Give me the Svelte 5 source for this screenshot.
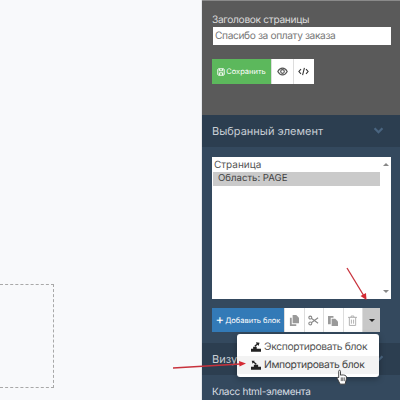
<script>
	let title = 'Спасибо за оплату заказа'
</script>

<div class="page">
	<div class="canvas">
		<div class="area"></div>
	</div>
	<div class="panel">
		<section class="top">
			<label for="title">Заголовок страницы</label>
			<input id="title" type="text" bind:value={title} />
			<div class="btns">
				<button class="save">
					<svg width="8" height="8" viewBox="0 0 10 10" fill="none" stroke="#fff" stroke-width="1.200"><rect x="1" y="1" width="8" height="8" rx="1"/><path d="M3 1v2.500h4V1M3 9V6h4v3"/></svg>
					Сохранить
				</button>
				<button class="ico">
					<svg width="11" height="9" viewBox="0 0 12 10" fill="none" stroke="#555" stroke-width="1.300"><path d="M.8 5C2 2.600 4 1.300 6 1.300S10 2.600 11.200 5C10 7.400 8 8.700 6 8.700S2 7.400.8 5z"/><circle cx="6" cy="5" r="2"/></svg>
				</button>
				<button class="ico">
					<svg width="11" height="9" viewBox="0 0 12 10" fill="none" stroke="#333" stroke-width="1.200"><path d="M3.200 2.400.9 5l2.300 2.600M8.800 2.400 11.100 5 8.800 7.600M7 1 5 9"/></svg>
				</button>
			</div>
		</section>

		<header class="head">
			<span>Выбранный элемент</span>
			<svg class="chev" width="11" height="7" viewBox="0 0 12 8" fill="none" stroke="#4a6580" stroke-width="2.600"><path d="M1.500 1.500 6 6l4.500-4.500"/></svg>
		</header>

		<section class="body">
			<div class="tree">
				<div class="tree-root">Страница</div>
				<div class="tree-item">Область: PAGE</div>
				<i class="scroll up"></i>
				<i class="scroll down"></i>
			</div>
			<div class="tools">
				<button class="add"><b>+</b>Добавить блок</button>
				<button class="tool">
					<svg width="10" height="11" viewBox="0 0 11 12" fill="#9a9a9a"><path d="M4 0h4l3 3v6H4z"/><path d="M1 3h2v7h5v2H1z"/></svg>
				</button>
				<button class="tool">
					<svg width="11" height="11" viewBox="0 0 12 12" fill="none" stroke="#888" stroke-width="1.200"><circle cx="2.500" cy="2.800" r="1.600"/><circle cx="2.500" cy="9.200" r="1.600"/><path d="M4 3.800 11 9M4 8.200 11 3"/></svg>
				</button>
				<button class="tool">
					<svg width="10" height="11" viewBox="0 0 11 12" fill="#9a9a9a"><path d="M0 1h6v2H3v7H0z"/><path d="M4 4h4l3 3v5H4z"/></svg>
				</button>
				<button class="tool">
					<svg width="9" height="11" viewBox="0 0 10 12" fill="none" stroke="#aaa" stroke-width="1"><path d="M0 2.500h10M3.500 2.500V1h3v1.500M1.500 2.500V11.500h7V2.500M3.800 5v4.500M6.200 5v4.500"/></svg>
				</button>
				<button class="caret"><i></i></button>
			</div>
		</section>

		<header class="head">
			<span>Визу</span>
			<svg class="chev" width="11" height="7" viewBox="0 0 12 8" fill="none" stroke="#4a6580" stroke-width="2.600"><path d="M1.500 1.500 6 6l4.500-4.500"/></svg>
		</header>

		<section class="body last">
			<div class="cls">Класс html-элемента</div>
		</section>

		<div class="menu">
			<div class="menu-item">
				<svg width="10" height="10" viewBox="0 0 14 13" fill="#222"><path d="M0 9h14v4H0zM3 9V6h5V9zM7 0l5 .5-1.500 4.500-1.200-1.800L6 6 4.800 4.500 7.800 2.200z"/></svg>
				<span>Экспортировать блок</span>
			</div>
			<div class="menu-item active">
				<svg width="10" height="10" viewBox="0 0 14 13" fill="#222"><path d="M0 9h14v4H0zM4 9V6h6V9zM1 .5l4 .2-.4 1.300L8 4.800 6.800 6 3.500 3.200 2.200 4.600z"/></svg>
				<span>Импортировать блок</span>
			</div>
		</div>

		<svg class="cursor" width="12" height="16" viewBox="0 0 16 21"><path d="M4.500 1.500c1 0 1.500.7 1.500 1.500v5c2-.5 6.500-.3 7.500 1.200.6 1.500.5 4-.3 6.300l-1 4.500H5.500L1.700 12.500c-.6-1.200.6-2.200 1.900-1.200V3c0-.8.200-1.500.9-1.500z" fill="#fff" stroke="#333" stroke-width="1.200"/><path d="M7 11v5M9 11v5M11 11v5" stroke="#333" stroke-width="1"/></svg>
	</div>

	<svg class="arrows" width="400" height="400" viewBox="0 0 400 400" fill="none">
		<path d="M347 268 364 296" stroke="#c8323c" stroke-width="1.300"/>
		<path d="M366.500 300 360.500 296 366 293z" fill="#d42a33"/>
		<path d="M173 368 240 364" stroke="#c8323c" stroke-width="1.300"/>
		<path d="M246 363.500 239 361 239.500 366.500z" fill="#d42a33"/>
	</svg>
</div>

<style>
	:global(body) {
		margin: 0;
	}

	.page {
		position: relative;
		display: flex;
		width: 400px;
		height: 400px;
		overflow: hidden;
		font-family: Inter, "Noto Sans", sans-serif;
		text-rendering: geometricPrecision;
		background: #f8f9fb;
	}

	.canvas {
		flex: 0 0 202px;
		padding-top: 284px;
		box-sizing: border-box;
		border-right: 1px solid #e6e8ec;
	}

	.area {
		width: 53px;
		height: 102px;
		border: 1px dashed #a8a8a8;
		border-left: 0;
	}

	.panel {
		position: relative;
		flex: 1;
		display: flex;
		flex-direction: column;
		min-width: 0;
		background: #34495e;
	}

	.top {
		flex: none;
		height: 115px;
		box-sizing: border-box;
		padding: 12px 9px 0 10px;
		background: #5a5a5a;
		border-top: 1px solid #8a8a8a;
	}

	label {
		display: block;
		font-size: 10.200px;
		letter-spacing: -0.33px;
		line-height: 14px;
		color: #dcdcdc;
	}

	input {
		display: block;
		width: 178px;
		height: 18px;
		margin: 0 0 0 1px;
		padding: 0 2px;
		box-sizing: border-box;
		border: 0;
		border-radius: 0;
		outline: 0;
		background: #fff;
		font: 10.200px Inter, sans-serif;
		letter-spacing: -0.38px;
		text-rendering: geometricPrecision;
		color: #777;
	}

	.btns {
		display: flex;
		margin-top: 14px;
		height: 25px;
		gap: 1px;
		width: 102px;
		background: #ddd;
	}

	button {
		flex: none;
		display: flex;
		align-items: center;
		justify-content: center;
		padding: 0;
		border: 0;
		font-family: inherit;
		text-rendering: geometricPrecision;
		background: #fff;
	}

	.save {
		width: 59px;
		gap: 1px;
		background: #5cb85c;
		color: #fff;
		font-size: 7.500px;
	}

	.ico {
		width: 20.500px;
	}

	.head {
		flex: none;
		display: flex;
		align-items: center;
		justify-content: space-between;
		height: 32px;
		padding: 0 16px 0 10px;
		background: #2c3e50;
		font-size: 11px;
		color: #c8ced5;
	}

	.chev {
		margin-top: -1px;
	}

	.body {
		flex: none;
		height: 196px;
		box-sizing: border-box;
		padding: 10px 9px 0 10px;
	}

	.tree {
		position: relative;
		height: 142px;
		padding: 2px 11px 0 1px;
		box-sizing: border-box;
		background: #fff;
		font-size: 10px;
		color: #555;
	}

	.tree-root {
		padding-left: 1px;
		line-height: 13px;
	}

	.tree-item {
		padding-left: 5px;
		line-height: 14px;
		background: #cacaca;
		color: #444;
		font-size: 9.600px;
	}

	.scroll {
		position: absolute;
		right: 2px;
		border-left: 3px solid transparent;
		border-right: 3px solid transparent;
	}

	.up {
		top: 6px;
		border-bottom: 3px solid #888;
	}

	.down {
		bottom: 6px;
		border-top: 3px solid #888;
	}

	.tools {
		display: flex;
		margin-top: 9px;
		height: 24px;
		width: 168px;
		gap: 1px;
		background: #ddd;
	}

	.add {
		width: 72px;
		gap: 1px;
		background: #337ab7;
		color: #fff;
		font-size: 7.500px;
	}

	.add b {
		font-size: 13px;
		font-weight: 400;
	}

	.tool {
		width: 18.500px;
	}

	.caret {
		width: 17px;
		background: #c8c8c8;
	}

	.caret i {
		border-left: 3px solid transparent;
		border-right: 3px solid transparent;
		border-top: 3px solid #222;
	}

	.last {
		height: 25px;
		padding-top: 10px;
	}

	.cls {
		font-size: 10px;
		letter-spacing: -0.3px;
		line-height: 14px;
		color: #d8dde2;
	}

	.menu {
		position: absolute;
		left: 35px;
		top: 334px;
		width: 142px;
		height: 43px;
		padding: 4px 0;
		box-sizing: border-box;
		background: #fff;
		border-radius: 3px;
		box-shadow: 0 2px 6px rgba(0, 0, 0, 0.3);
	}

	.menu-item {
		display: flex;
		align-items: center;
		gap: 3px;
		height: 18px;
		padding-left: 14px;
		font-size: 10.300px;
		letter-spacing: -0.35px;
		white-space: nowrap;
		color: #555;
	}

	.menu-item.active {
		background: #f3f3f3;
		color: #444;
	}

	.cursor {
		position: absolute;
		left: 134px;
		top: 369px;
	}

	.arrows {
		position: absolute;
		left: 0;
		top: 0;
		pointer-events: none;
	}
</style>
